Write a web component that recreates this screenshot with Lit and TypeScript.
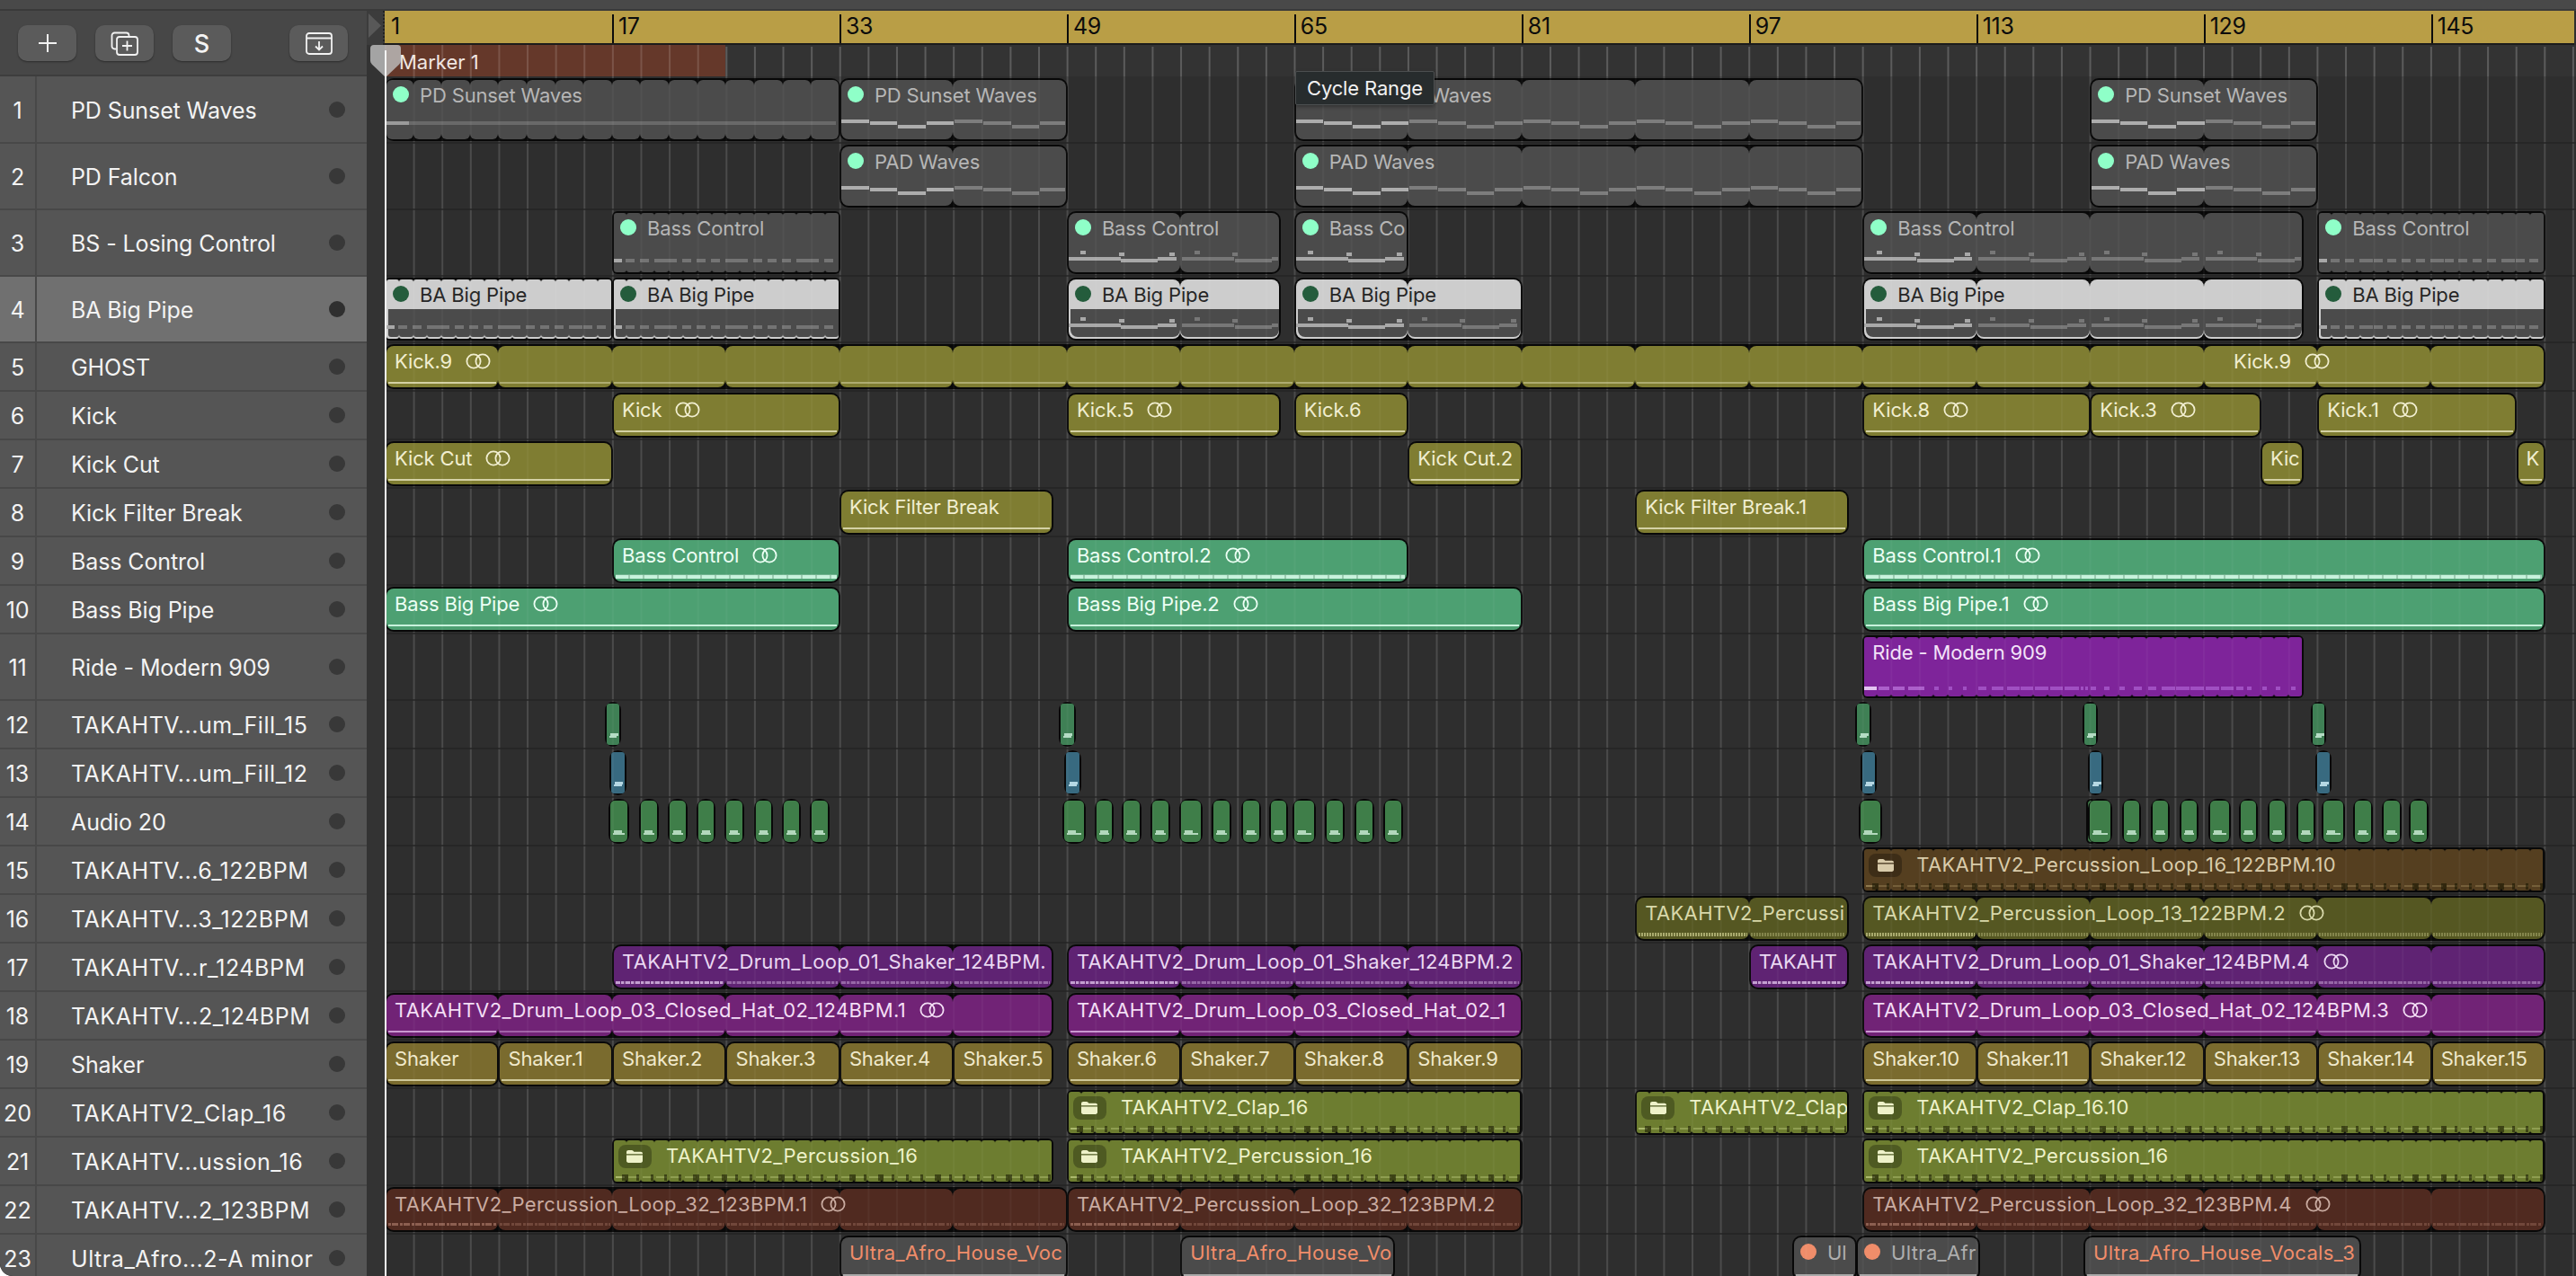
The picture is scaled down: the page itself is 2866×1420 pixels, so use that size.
import { LitElement, html, css, svg } from "lit";
import { customElement } from "lit/decorators.js";

const B = 15.81;
const X0 = 428;
const bx = (b: number) => X0 + (b - 1) * B;

const TRACKS: [string, boolean?][] = [
  ["PD Sunset Waves", true], ["PD Falcon", true], ["BS - Losing Control", true], ["BA Big Pipe", true],
  ["GHOST"], ["Kick"], ["Kick Cut"], ["Kick Filter Break"], ["Bass Control"], ["Bass Big Pipe"],
  ["Ride - Modern 909", true], ["TAKAHTV...um_Fill_15"], ["TAKAHTV...um_Fill_12"], ["Audio 20"],
  ["TAKAHTV...6_122BPM"], ["TAKAHTV...3_122BPM"], ["TAKAHTV...r_124BPM"], ["TAKAHTV...2_124BPM"],
  ["Shaker"], ["TAKAHTV2_Clap_16"], ["TAKAHTV...ussion_16"], ["TAKAHTV...2_123BPM"], ["Ultra_Afro...2-A minor"],
];

interface Note { l: number; t: number; w: number; h: number; c: string; }
interface Reg {
  x0: number; x1: number; kind: string; label?: string; seg?: number; dot?: boolean; folder?: boolean;
  loop?: boolean; wave?: string; notes?: Note[]; extra?: { x: number; text: string }[]; sel?: boolean;
}

// ---- note generators -----------------------------------------------------
const padNotes = (bars: number): Note[] => {
  const out: Note[] = [];
  for (let k = 0; k * 8 < bars; k++) {
    const c = k === 0 ? "#adadad" : "#7d7d7d";
    for (const [a, b, t] of [[0, 2, 46], [2, 4, 48], [4, 6, 52], [6, 8, 48]]) {
      if (k * 8 + a < bars) out.push({ l: 2 + (k * 8 + a) * B, t, w: (b - a) * B - 1, h: 4, c });
    }
  }
  return out;
};
const flatNotes = (bars: number): Note[] => [
  { l: 2, t: 48, w: 25, h: 4, c: "#9a9a9a" },
  { l: 27, t: 48, w: bars * B - 31, h: 4, c: "#696969" },
];
const dashNotes = (bars: number, t = 53): Note[] => {
  const out: Note[] = [{ l: 2, t, w: 9, h: 4, c: "#a8a8a8" }];
  for (let i = 0; i < bars - 1; i++) {
    out.push({ l: 15 + i * B, t, w: i % 5 === 2 ? 15 : 10, h: 4, c: "#747474" });
  }
  return out;
};
const bassNotes = (bars: number): Note[] => {
  const out: Note[] = [];
  for (let k = 0; k * 8 < bars; k++) {
    const c = k === 0 ? "#a8a8a8" : "#777777";
    const o = 2 + k * 8 * B;
    const add = (a: number, w: number, t: number, h = 4) => {
      if (k * 8 + a < bars - 0.1) out.push({ l: o + a * B, t, w: w * B, h, c });
    };
    add(0, 3.65, 51);
    add(3.7, 2.6, 53);
    add(6.3, 1.1, 51);
    add(0.85, 0.38, 44);
    add(3.55, 0.38, 46);
    add(7.1, 0.38, 46);
    add(7.3, 0.3, 51);
  }
  return out;
};
const RIDE = [[427, 445], [450, 470], [475, 502], [519, 525], [542, 548], [565, 572], [590, 603], [612, 632], [637, 658], [660, 680], [683, 705], [708, 728], [732, 755], [758, 763], [765, 770], [775, 783], [797, 805], [822, 830], [845, 858], [868, 882], [890, 912], [914, 936], [938, 960], [963, 985], [988, 1008], [1012, 1025], [1030, 1038], [1055, 1063], [1078, 1085], [1102, 1110]];
const rideNotes = (): Note[] => [
  { l: 2, t: 57, w: 14, h: 4, c: "#e4c4f2" },
  ...RIDE.map(([a, b], i) => ({ l: (a - 401) / 1.471, t: 57, w: (b - a) / 1.471, h: 4, c: i < 3 ? "#ac5fcb" : "#a04fc2" })),
];
const folderTicks = (bars: number): Note[] => {
  const out: Note[] = [];
  const ws = [7, 3, 3, 3, 3, 7, 3, 6, 3, 3, 3];
  for (let i = 0; i < bars; i++) {
    out.push({ l: 11 + i * B, t: 40, w: ws[i % ws.length], h: 7, c: "rgba(20,20,0,.55)" });
  }
  return out;
};

const r = (a: number, b: number, kind: string, label: string | undefined, o: Partial<Reg> = {}): Reg => ({
  x0: bx(a), x1: bx(b), kind, label, ...o,
});
const px = (a: number, b: number, kind: string): Reg => ({ x0: a, x1: b, kind, wave: "clipw" });

const pad = (a: number, b: number, label: string): Reg =>
  r(a, b, "grey", label, { dot: true, seg: 8, notes: padNotes(b - a) });

const sh = (a: number, b: number, label: string): Reg => r(a, b, "shaker", label, { wave: "line" });
const fold = (a: number, b: number, label: string): Reg =>
  r(a, b, "clap", label, { folder: true, seg: 1, wave: "line", notes: folderTicks(b - a) });

const row14 = [[677, 699], [711, 732], [743, 764], [775, 795], [806, 827], [839, 859], [870, 890], [901, 922],
  [1182, 1207], [1218, 1238], [1248, 1269], [1280, 1301], [1312, 1337], [1348, 1369], [1381, 1402], [1412, 1432], [1438, 1463], [1474, 1495], [1507, 1528], [1539, 1560],
  [2068, 2093], [2321, 2331], [2323, 2349], [2361, 2381], [2393, 2413], [2425, 2445], [2457, 2481], [2491, 2511], [2523, 2543], [2555, 2575], [2583, 2608], [2618, 2639], [2650, 2671], [2680, 2701]];

const LANES: Reg[][] = [
  [
    r(1, 33, "grey", "PD Sunset Waves", { dot: true, seg: 2, notes: flatNotes(32) }),
    pad(33, 49, "PD Sunset Waves"), pad(65, 105, "PD Sunset Waves"), pad(121, 137, "PD Sunset Waves"),
  ],
  [pad(33, 49, "PAD Waves"), pad(65, 105, "PAD Waves"), pad(121, 137, "PAD Waves")],
  [
    r(17, 33, "grey", "Bass Control", { dot: true, seg: 1, notes: dashNotes(16) }),
    r(49, 64, "grey", "Bass Control", { dot: true, seg: 8, notes: bassNotes(15) }),
    r(65, 73, "grey", "Bass Co", { dot: true, notes: bassNotes(8) }),
    r(105, 136, "grey", "Bass Control", { dot: true, seg: 8, notes: bassNotes(31) }),
    r(137, 153, "grey", "Bass Control", { dot: true, seg: 1, notes: dashNotes(16) }),
  ],
  [
    r(1, 17, "sel", "BA Big Pipe", { dot: true, seg: 1, sel: true, notes: dashNotes(16) }),
    r(17, 33, "sel", "BA Big Pipe", { dot: true, seg: 1, sel: true, notes: dashNotes(16) }),
    r(49, 64, "sel", "BA Big Pipe", { dot: true, seg: 8, sel: true, notes: bassNotes(15) }),
    r(65, 81, "sel", "BA Big Pipe", { dot: true, seg: 8, sel: true, notes: bassNotes(16) }),
    r(105, 136, "sel", "BA Big Pipe", { dot: true, seg: 8, sel: true, notes: bassNotes(31) }),
    r(137, 153, "sel", "BA Big Pipe", { dot: true, seg: 1, sel: true, notes: dashNotes(16) }),
  ],
  [r(1, 153, "olive", "Kick.9", { seg: 8, loop: true, wave: "line", extra: [{ x: 2055, text: "Kick.9" }] })],
  [
    r(17, 33, "olive", "Kick", { loop: true, wave: "line" }),
    r(49, 64, "olive", "Kick.5", { loop: true, wave: "line" }),
    r(65, 73, "olive", "Kick.6", { wave: "line" }),
    r(105, 121, "olive", "Kick.8", { loop: true, wave: "line" }),
    r(121, 133, "olive", "Kick.3", { loop: true, wave: "line" }),
    r(137, 151, "olive", "Kick.1", { loop: true, wave: "line" }),
  ],
  [
    r(1, 17, "olive", "Kick Cut", { loop: true, wave: "line" }),
    r(73, 81, "olive", "Kick Cut.2", { wave: "line" }),
    r(133, 136, "olive", "Kic", { wave: "line" }),
    r(151, 153, "olive", "K", { wave: "line" }),
  ],
  [
    r(33, 48, "olive", "Kick Filter Break", { wave: "line" }),
    r(89, 104, "olive", "Kick Filter Break.1", { wave: "line" }),
  ],
  [
    r(17, 33, "green", "Bass Control", { loop: true, wave: "thick" }),
    r(49, 73, "green", "Bass Control.2", { loop: true, wave: "thick" }),
    r(105, 153, "green", "Bass Control.1", { loop: true, wave: "thick" }),
  ],
  [
    r(1, 33, "green", "Bass Big Pipe", { loop: true, wave: "line" }),
    r(49, 81, "green", "Bass Big Pipe.2", { loop: true, wave: "line" }),
    r(105, 153, "green", "Bass Big Pipe.1", { loop: true, wave: "line" }),
  ],
  [r(105, 136, "ride", "Ride - Modern 909", { seg: 1, notes: rideNotes() })],
  [[673, 690], [1178, 1196], [2064, 2081], [2317, 2333], [2571, 2587]].map(([a, b]) => px(a, b, "clipg")),
  [[678, 696], [1184, 1202], [2070, 2087], [2323, 2339], [2576, 2593]].map(([a, b]) => px(a, b, "clipb")),
  row14.map(([a, b]) => px(a, b, "clipa")),
  [r(105, 153, "brown", "TAKAHTV2_Percussion_Loop_16_122BPM.10", { folder: true, seg: 1, wave: "line", notes: folderTicks(48) })],
  [
    r(89, 104, "dolive", "TAKAHTV2_Percussi", { seg: 8, wave: "tex" }),
    r(105, 153, "dolive", "TAKAHTV2_Percussion_Loop_13_122BPM.2", { seg: 8, loop: true, wave: "tex" }),
  ],
  [
    r(17, 48, "purple", "TAKAHTV2_Drum_Loop_01_Shaker_124BPM.", { seg: 8, wave: "dash" }),
    r(49, 81, "purple", "TAKAHTV2_Drum_Loop_01_Shaker_124BPM.2", { seg: 8, wave: "dash" }),
    r(97, 104, "purple", "TAKAHT", { wave: "dash" }),
    r(105, 153, "purple", "TAKAHTV2_Drum_Loop_01_Shaker_124BPM.4", { seg: 8, loop: true, wave: "dash" }),
  ],
  [
    r(1, 48, "magenta", "TAKAHTV2_Drum_Loop_03_Closed_Hat_02_124BPM.1", { seg: 8, loop: true, wave: "line" }),
    r(49, 81, "magenta", "TAKAHTV2_Drum_Loop_03_Closed_Hat_02_1", { seg: 8, wave: "line" }),
    r(105, 153, "magenta", "TAKAHTV2_Drum_Loop_03_Closed_Hat_02_124BPM.3", { seg: 8, loop: true, wave: "line" }),
  ],
  [
    sh(1, 9, "Shaker"), sh(9, 17, "Shaker.1"), sh(17, 25, "Shaker.2"), sh(25, 33, "Shaker.3"), sh(33, 41, "Shaker.4"), sh(41, 48, "Shaker.5"),
    sh(49, 57, "Shaker.6"), sh(57, 65, "Shaker.7"), sh(65, 73, "Shaker.8"), sh(73, 81, "Shaker.9"),
    sh(105, 113, "Shaker.10"), sh(113, 121, "Shaker.11"), sh(121, 129, "Shaker.12"), sh(129, 137, "Shaker.13"), sh(137, 145, "Shaker.14"), sh(145, 153, "Shaker.15"),
  ],
  [fold(49, 81, "TAKAHTV2_Clap_16"), fold(89, 104, "TAKAHTV2_Clap"), fold(105, 153, "TAKAHTV2_Clap_16.10")],
  [fold(17, 48, "TAKAHTV2_Percussion_16"), fold(49, 81, "TAKAHTV2_Percussion_16"), fold(105, 153, "TAKAHTV2_Percussion_16")],
  [
    r(1, 49, "rust", "TAKAHTV2_Percussion_Loop_32_123BPM.1", { seg: 8, loop: true, wave: "noise" }),
    r(49, 81, "rust", "TAKAHTV2_Percussion_Loop_32_123BPM.2", { seg: 8, wave: "noise" }),
    r(105, 153, "rust", "TAKAHTV2_Percussion_Loop_32_123BPM.4", { seg: 8, loop: true, wave: "noise" }),
  ],
  [
    r(33, 49, "ultra", "Ultra_Afro_House_Voc", { wave: "ul" }),
    r(57, 72, "ultra", "Ultra_Afro_House_Vo", { wave: "ul" }),
    { x0: 1994, x1: 2065, kind: "ultra-d", label: "Ul", dot: true, wave: "ul" },
    { x0: 2065, x1: 2202, kind: "ultra-d", label: "Ultra_Afr", dot: true, wave: "ul" },
    { x0: 2318, x1: 2626, kind: "ultra", label: "Ultra_Afro_House_Vocals_3", wave: "ul" },
  ],
];

const loopIcon = svg`<svg class="loop" viewBox="0 0 28 18" width="28" height="18"><circle cx="9" cy="9" r="7.6" fill="none" stroke="currentColor" stroke-width="1.8"/><circle cx="19" cy="9" r="7.6" fill="none" stroke="currentColor" stroke-width="1.8"/></svg>`;
const folderIcon = svg`<svg viewBox="0 0 20 16" width="20" height="16"><path fill="currentColor" d="M1 3.2C1 1.9 1.9 1 3.2 1h3.6c.7 0 1.2.3 1.7.8l.9 1h7.4c1.3 0 2.2.9 2.2 2.2v.2H1zM1 6.6h18v6.2c0 1.3-.9 2.2-2.2 2.2H3.2C1.9 15 1 14.100 1 12.800z"/></svg>`;

@customElement("app-root")
export class AppRoot extends LitElement {
  static styles = css`
    :host { display: block; width: 2866px; height: 1420px; overflow: hidden; background: #000; position: relative;
      border-bottom-left-radius: 14px; font-family: Inter, "Liberation Sans", sans-serif; }
    .strip { height: 12px; background: #494949; box-shadow: inset 0 -2px 0 #3a3a3a; }
    .body { display: grid; grid-template-columns: 408px 20px 1fr; }
    .side { background: #555; }
    .toolbar { height: 73px; box-sizing: border-box; background: #474747; border-bottom: 2px solid #3d3d3d;
      display: flex; align-items: flex-start; gap: 21px; padding: 16px 21px 0 20px; }
    .btn { width: 65px; height: 40px; box-sizing: border-box; border-radius: 10px; background: #5b5b5b;
      box-shadow: 0 1px 2px rgba(0,0,0,.4); display: flex; align-items: center; justify-content: center;
      color: #f4f4f4; font-size: 27px; font-weight: 500; }
    .btn.end { margin-left: auto; }
    .trk { height: 54px; position: relative; display: flex; align-items: center; color: #f3f3f3; font-size: 25px; letter-spacing: -0.1px; }
    .trk.tall { height: 74px; }
    .trk.on { background: #707070; }
    .trk::after { content: ""; position: absolute; left: 0; right: 0; bottom: -1px; height: 2px; background: #484848; z-index: 1; }
    .num { width: 41px; height: 100%; flex: none; box-sizing: border-box; border-right: 2px solid #484848; display: flex; align-items: center; justify-content: center; padding-top: 1px; }
    .name { flex: 1; padding: 1px 0 0 38px; white-space: nowrap; }
    .name.wide { letter-spacing: .55px; }
    .mute { width: 18px; height: 18px; border-radius: 50%; background: #383838; margin-right: 24px; }
    .trk.on .mute { background: #2f2f2f; }

    .gutter { background: #333; }
    .gutter-head { height: 38px; background: #3c3c3c; box-sizing: border-box; border-right: 2px dotted #222; position: relative; }
    .gutter-head svg { display: block; position: absolute; left: 0; top: 1px; }

    .time { background: #2e2e2e; min-width: 0; }
    .ruler { height: 38px; box-sizing: border-box; background: #b99e46; border-bottom: 2px solid #1c1c1c; margin-right: 2px; position: relative; color: #0c0c0c; font-size: 25px; letter-spacing: -0.3px; }
    .tick { position: absolute; top: 4px; bottom: 0; width: 2px; background: #0c0c0c; }
    .tick.first { background: none; }
    .tick span { position: absolute; left: 7px; top: 0; line-height: 26px; }
    .mlane { height: 35px; position: relative; background-color: #333;
      background-image: linear-gradient(90deg, rgba(255,255,255,.2) 2px, transparent 2px); background-size: 31.62px 100%; background-position: 0 2px; background-repeat: repeat-x; }
    .marker { position: absolute; left: 0; top: 0; bottom: 0; width: 379px; background-color: #65382a; color: #f0e6e2; font-size: 22px;
      background-image: linear-gradient(90deg, rgba(255,255,255,.14) 2px, transparent 2px); background-size: 31.62px 100%; }
    .marker span { position: absolute; left: 16px; top: 5px; line-height: 28px; }

    .lanes { position: relative;
      background-image: linear-gradient(90deg, rgba(255,255,255,.105) 2px, transparent 2px); background-size: 31.62px 100%; }
    .lanes-over { position: absolute; inset: 0; pointer-events: none; z-index: 5;
      background-image: linear-gradient(90deg, rgba(255,255,255,.035) 2px, transparent 2px); background-size: 31.62px 100%; }
    .lane { height: 54px; position: relative; }
    .lane.tall { height: 74px; }
    .lane::before { content: ""; position: absolute; left: 0; right: 0; bottom: -1px; height: 2px; background: #262626; }

    .reg { position: absolute; top: 2px; bottom: 2px; background: #080808; border-radius: 10px; box-sizing: border-box; padding: 2px; display: flex;
      --fill: #4b4b4b; --txt: #b6b6b6; --wv: #ccc; --dot: #8fffc8; --r: 8px; }
    .seg { position: relative; background: var(--fill); border-radius: var(--r); flex: none; overflow: hidden; }
    .seg.s1 { --r: 3px; }
    .seg.s2 { --r: 6px; }
    .reg.fine { border-radius: 6px; }
    .lower { position: absolute; left: 0; right: 0; bottom: 2px; top: 33px; background: #4b4b4b; border-radius: 0 0 var(--r) var(--r); }
    .seg:first-child .lower { left: 2px; }
    .seg:last-child .lower { right: 2px; }
    .wave { position: absolute; left: 2px; right: 2px; bottom: 4px; height: 2px; background: var(--wv); }
    .seg:not(:first-child) .wave { opacity: .55; }
    .wave.thick { height: 4px; bottom: 3px; background: repeating-linear-gradient(90deg, var(--wv) 0 14px, rgba(255,255,255,.45) 14px 16px); box-shadow: 0 -1px 0 rgba(255,255,255,.2); }
    .wave.tex { height: 4px; bottom: 3px; background: repeating-linear-gradient(90deg, var(--wv) 0 2px, transparent 2px 3px); }
    .wave.dash { height: 3px; bottom: 4px; background: repeating-linear-gradient(90deg, var(--wv) 0 5px, transparent 5px 6px, var(--wv) 6px 9px, rgba(255,255,255,.2) 9px 11px); }
    .wave.noise { height: 3px; bottom: 5px; background: repeating-linear-gradient(90deg, var(--wv) 0 3px, transparent 3px 4px, var(--wv) 4px 11px, transparent 11px 13px); }
    .wave.clipw { left: 3px; right: 3px; bottom: 8px; height: 2px; }
    .wave.clipw::before { content: ""; position: absolute; left: 1px; width: 9px; height: 3px; top: -3px; background: var(--wv); }
    .wave.ul { bottom: auto; top: 41px; height: 3px; }
    .note { position: absolute; z-index: 2; }
    .clip { position: absolute; inset: 2px; overflow: hidden; z-index: 3; border-radius: 6px; pointer-events: none; }
    .lab { position: absolute; top: 4px; left: 9px; height: 26px; line-height: 26px; font-size: 22px; letter-spacing: -0.15px; color: var(--txt); white-space: nowrap; display: flex; align-items: center; }
    .lab.wide { letter-spacing: .35px; }
    .lab.d { left: 37px; }
    .lab.f { left: 58px; }
    .dot { position: absolute; left: 7px; top: 7px; width: 18px; height: 18px; border-radius: 50%; background: var(--dot); }
    .badge { position: absolute; left: 5px; top: 5px; width: 37px; height: 26px; border-radius: 8px; background: rgba(0,0,0,.28); color: var(--txt); display: flex; align-items: center; justify-content: center; }
    .loop { margin-left: 15px; flex: none; display: block; }

    .k-sel { --fill: #cdcdcd; --txt: #262626; --dot: #245c3c; }
    .k-olive { --fill: #7f7d32; --txt: #f1eed0; --wv: #d4d1a4; }
    .k-shaker { --fill: #7a6b2e; --txt: #f0e9cb; --wv: #cfc89a; }
    .k-green { --fill: #4da072; --txt: #ecfff4; --wv: #c7f2dc; }
    .k-ride { --fill: #7e249a; --txt: #f3e2f8; }
    .k-clipg { --fill: #3f8055; --wv: #b4dcc4; --r: 3px; }
    .k-clipb { --fill: #386a80; --wv: #b6d8e4; --r: 3px; }
    .k-clipa { --fill: #3f7e49; --wv: #b2d8bc; --r: 5px; }
    .k-brown { --fill: #553f20; --txt: #d9cbaa; --wv: #8f7a50; }
    .k-dolive { --fill: #555722; --txt: #d8d8aa; --wv: #a9aa6e; }
    .k-purple { --fill: #5f2373; --txt: #ead8f2; --wv: #c39fd0; }
    .k-magenta { --fill: #712376; --txt: #f3def5; --wv: #c998d0; }
    .k-clap { --fill: #6d7d30; --txt: #eef2c9; --wv: #abb96d; }
    .k-rust { --fill: #502a20; --txt: #c9aba0; --wv: #8c5f50; }
    .k-ultra { --fill: #4b4b4b; --txt: #f08d6a; --wv: #a9a9a9; }
    .k-ultra-d { --fill: #4b4b4b; --txt: #aeaeae; --wv: #a9a9a9; --dot: #f08d6a; }

    .playhead { position: absolute; left: 412px; top: 50px; z-index: 8; display: block; }
    .pline { position: absolute; left: 428px; top: 56px; bottom: 0; width: 2px; background: #f4f4f4; z-index: 9; }
    .tip { position: absolute; left: 1441px; top: 79px; width: 155px; height: 38px; box-sizing: border-box; z-index: 10; border: 1px solid #4c4f50; background: #272c2d; color: #f2f2f2;
      font-size: 22px; letter-spacing: -0.15px; display: flex; align-items: center; justify-content: center; border-radius: 2px; box-shadow: 0 2px 4px rgba(0,0,0,.35); }
  `;

  private region(g: Reg) {
    const left = g.x0 - X0;
    const width = g.x1 - g.x0 + 1;
    const inner = width - 4;
    const stops: number[] = [];
    if (g.seg) {
      const a = (g.x0 - X0) / B;
      const b = (g.x1 - X0) / B;
      for (let i = Math.ceil(a / g.seg + 0.001) * g.seg; i < b - 0.2; i += g.seg) {
        stops.push(i * B - left);
      }
    }
    const edges = [0, ...stops.map((s) => s - 2), inner];
    const cls = g.seg === 1 ? "s1" : g.seg === 2 ? "s2" : "";
    const wide = g.label && g.label.includes("_") ? "wide" : "";
    return html`<div class="reg k-${g.kind} ${g.seg === 1 ? "fine" : ""}" style="left:${left}px;width:${width}px">
      ${edges.slice(1).map((e, i) => html`<div class="seg ${cls}" style="width:${e - edges[i]}px">
        ${g.sel ? html`<div class="lower"></div>` : ""}
        ${g.wave ? html`<i class="wave ${g.wave}"></i>` : ""}
      </div>`)}
      ${(g.notes ?? []).filter((n) => n.l < width - 4).map((n) => html`<i class="note" style="left:${n.l}px;top:${n.t}px;width:${Math.min(n.w, width - 3 - n.l)}px;height:${n.h}px;background:${n.c}"></i>`)}
      ${g.label
        ? html`<div class="clip">
            ${g.dot ? html`<i class="dot"></i>` : ""}
            ${g.folder ? html`<span class="badge">${folderIcon}</span>` : ""}
            <span class="lab ${wide} ${g.dot ? "d" : g.folder ? "f" : ""}">${g.label}${g.loop ? loopIcon : ""}</span>
            ${(g.extra ?? []).map((x) => html`<span class="lab" style="left:${x.x}px">${x.text}${loopIcon}</span>`)}
          </div>`
        : ""}
    </div>`;
  }

  render() {
    const rulerBars = [1, 17, 33, 49, 65, 81, 97, 113, 129, 145];
    return html`
      <div class="strip"></div>
      <div class="body">
        <div class="side">
          <div class="toolbar">
            <div class="btn"><svg width="22" height="22" viewBox="0 0 22 22"><path d="M11 1v20M1 11h20" stroke="#f2f2f2" stroke-width="2" fill="none"/></svg></div>
            <div class="btn"><svg width="31" height="27" viewBox="0 0 31 27" fill="none" stroke="#f2f2f2" stroke-width="1.8"><path d="M6 19.500H4.500a3 3 0 0 1-3-3V4.500a3 3 0 0 1 3-3h13a3 3 0 0 1 3 3V6"/><rect x="7" y="6" width="23" height="20" rx="3"/><path d="M18.500 10.500v11M13 16h11"/></svg></div>
            <div class="btn">S</div>
            <div class="btn end"><svg width="30" height="25" viewBox="0 0 30 25" fill="none" stroke="#f2f2f2" stroke-width="1.8"><rect x="1" y="1" width="28" height="23" rx="3"/><path d="M1 6.500h28M15 10v9.500M11 15.500l4 4 4-4"/></svg></div>
          </div>
          ${TRACKS.map(([name, tall], i) => html`<div class="trk ${tall ? "tall" : ""} ${i === 3 ? "on" : ""}">
            <div class="num">${i + 1}</div><div class="name ${/_|\.\.\./.test(name) ? "wide" : ""}">${name}</div><i class="mute"></i>
          </div>`)}
        </div>
        <div class="gutter">
          <div class="gutter-head"><svg width="18" height="30" viewBox="0 0 18 30"><path d="M2 2l14 13.500L2 29z" fill="#585858"/></svg></div>
        </div>
        <div class="time">
          <div class="ruler">
            ${rulerBars.map((b, i) => html`<div class="tick ${i === 0 ? "first" : ""}" style="left:${bx(b) - X0}px"><span>${b}</span></div>`)}
          </div>
          <div class="mlane"><div class="marker"><span>Marker 1</span></div></div>
          <div class="lanes">
            ${LANES.map((l, i) => html`<div class="lane ${TRACKS[i][1] ? "tall" : ""}">${l.map((g) => this.region(g))}</div>`)}
            <div class="lanes-over"></div>
          </div>
        </div>
      </div>
      <svg class="playhead" width="34" height="36" viewBox="0 0 34 36"><path d="M4 0h26a4 4 0 0 1 4 4v13c0 2-.6 3.200-2 4.700L17 36 2 21.700C.6 20.200 0 19 0 17V4a4 4 0 0 1 4-4z" fill="#bdbdbd" fill-opacity=".82"/></svg>
      <div class="pline"></div>
      <div class="tip">Cycle Range</div>
    `;
  }
}
